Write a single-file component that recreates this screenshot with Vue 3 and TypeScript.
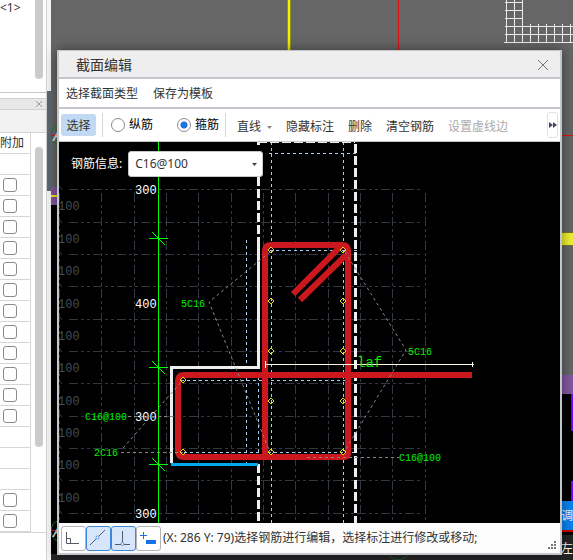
<script setup lang="ts">
import { ref } from 'vue'

type Point = [number, number]

const rows = ref([
  { hasBox: false, checked: false },
  ...Array.from({ length: 12 }, () => ({ hasBox: true, checked: false })),
  ...Array.from({ length: 3 }, () => ({ hasBox: false, checked: false })),
  ...Array.from({ length: 2 }, () => ({ hasBox: true, checked: false })),
])

const barKind = ref('stirrup')
const barInfo = ref('C16@100')
const snap = ref<Record<string, boolean>>({ angle: false, line: true, perp: true, add: false })

const gridY = [189, 222, 254, 286, 319, 351, 383, 416, 448, 480, 513]
const gridX = [101, 134, 166, 198, 231, 263, 295, 328, 360, 392, 425]
const spacingY = [206, 239, 271, 304, 336, 368, 401, 433, 465, 498]
const dimTicks = [238, 367, 464]
const dims: { y: number; text: string }[] = [
  { y: 194, text: '300' },
  { y: 308, text: '400' },
  { y: 421, text: '300' },
  { y: 518, text: '300' },
]
const tags: { x: number; y: number; text: string }[] = [
  { x: 181, y: 307, text: '5C16' },
  { x: 408, y: 355, text: '5C16' },
  { x: 85, y: 420, text: 'C16@100' },
  { x: 94, y: 456, text: '2C16' },
  { x: 399, y: 461, text: 'C16@100' },
]
const bars: Point[] = [
  ...[250, 301, 351, 401, 452].flatMap((y): Point[] => [[271, y], [343, y]]),
  [183, 380],
  [183, 452],
]
const meshX = [530, 538, 546, 554, 562, 570]
</script>

<template>
  <div class="app">
    <aside class="side">
      <section class="tree">
        <span class="tree-text">&lt;1&gt;</span>
        <span class="thumb tree-thumb"></span>
      </section>
      <header class="dock-head">
        <button class="dock-close" aria-label="关闭">
          <svg width="8" height="8" viewBox="0 0 8 8"><path d="M1 1l6 6M7 1l-6 6" /></svg>
        </button>
      </header>
      <section class="props">
        <table>
          <thead><tr><th>附加</th></tr></thead>
          <tbody>
            <tr v-for="(row, i) in rows" :key="i">
              <td><input v-if="row.hasBox" v-model="row.checked" type="checkbox" aria-label="附加" /></td>
            </tr>
          </tbody>
        </table>
        <div class="track"><span class="thumb"></span></div>
      </section>
    </aside>

    <div class="gutter"><span></span></div>

    <main class="work">
      <svg class="scene" viewBox="51 0 522 560" preserveAspectRatio="xMinYMin slice">
        <rect x="51" y="0" width="522" height="560" fill="#666" />
        <path d="M289 0V200" stroke="#8f8f28" stroke-width="4" />
        <path d="M289 0V200" stroke="#f2f200" stroke-width="2" />
        <path d="M398.500 0V200M500 135.500H573" stroke="#e01010" />
        <g stroke="#ededed" fill="none">
          <path d="M506.500 0V42M514.500 0V42M522.500 0V42M505 2.500H523M505 10.500H523M505 18.500H523M505 26.500H573M505 34.500H573M504 42.500H573" />
          <path v-for="x in meshX" :key="x" :d="`M${x + 0.5} 24V42`" />
        </g>
        <ellipse cx="59" cy="135" rx="8" ry="10" fill="none" stroke="#118a22" />
        <path d="M51 135.500H60" stroke="#e01010" />
        <text x="53" y="141" class="axis">A</text>
        <rect x="51" y="187" width="20" height="18" fill="#8557a3" />
        <rect x="51" y="195" width="20" height="2" fill="#f2f200" />
        <rect x="51" y="205" width="20" height="350" fill="#000" />
        <ellipse cx="59" cy="531" rx="8" ry="10" fill="none" stroke="#118a22" />
        <path d="M51 530.500H60" stroke="#e01010" />
        <text x="53" y="537" class="axis">A</text>
        <rect x="550" y="232" width="23" height="13" fill="#f0f032" />
        <path d="M550 232.500H573M550 245.500H573" stroke="#777722" />
        <rect x="550" y="375" width="23" height="19" fill="#8557a3" />
        <rect x="550" y="394" width="23" height="141" fill="#000" />
        <path d="M572 394V431M572 481V501" stroke="#7a00ff" stroke-width="2" />
        <rect x="550" y="501" width="23" height="29" fill="#0a84f0" />
        <path d="M550 531H573" stroke="#d00000" stroke-width="2" />
        <rect x="51" y="554" width="522" height="6" fill="#242424" />
        <rect x="550" y="535" width="23" height="25" fill="#242424" />
        <ellipse cx="398" cy="551" rx="10" ry="9" fill="none" stroke="#1d5a25" />
        <text x="561" y="520" class="cap">调</text>
        <text x="561" y="553" class="cap">左</text>
      </svg>
    </main>

    <section class="dialog" role="dialog" aria-label="截面编辑">
      <header class="title">
        <h1>截面编辑</h1>
        <button class="close" aria-label="关闭">
          <svg width="12" height="12" viewBox="0 0 12 12"><path d="M1 1l10 10M11 1L1 11" /></svg>
        </button>
      </header>

      <nav class="menu">
        <button>选择截面类型</button>
        <button>保存为模板</button>
      </nav>

      <div class="tools">
        <button class="pick">选择</button>
        <i class="sep"></i>
        <div class="radios">
          <label><input v-model="barKind" type="radio" name="kind" value="long" />纵筋</label>
          <label><input v-model="barKind" type="radio" name="kind" value="stirrup" />箍筋</label>
        </div>
        <i class="sep"></i>
        <div class="actions">
          <button class="drop">直线<svg width="5" height="3" viewBox="0 0 5 3"><path d="M0 0h5L2.500 3z" fill="#888" /></svg></button>
          <button>隐藏标注</button>
          <button>删除</button>
          <button>清空钢筋</button>
          <button disabled>设置虚线边</button>
        </div>
        <button class="more" aria-label="更多">
          <svg width="8" height="6" viewBox="0 0 8 6"><path d="M0 0l4 3-4 3zM4 0l4 3-4 3z" fill="#44485e" /></svg>
        </button>
      </div>

      <div class="canvas">
        <svg viewBox="59 142 501 381" preserveAspectRatio="xMinYMin meet">
          <g class="grid">
            <path v-for="y in gridY" :key="'h' + y" :d="`M69 ${y + 0.5}H422`" />
            <path v-for="x in gridX" :key="'v' + x" :d="`M${x + 0.5} 193V523`" />
            <path d="M59.500 193V523" />
            <path v-for="y in gridY" :key="'e' + y" :d="`M59 ${y - 3}l3 4`" class="solid" />
          </g>
          <g class="mono dim-grid">
            <text v-for="y in spacingY" :key="y" x="58" :y="y + 4">100</text>
          </g>

          <g class="guides">
            <path d="M271.500 142V523M343.500 142V523M269 153.500H357M270 250.500H357" />
            <path d="M246.500 240V464M258.500 377V454M181 380.500H345M178 452.500H357" />
          </g>

          <g class="axis-green">
            <path d="M158.500 142V523" />
            <path v-for="y in dimTicks" :key="y" :d="`M149 ${y + 0.5}h19M152 ${y - 6}l13 13`" />
          </g>
          <g class="mono dims">
            <text v-for="d in dims" :key="d.y" x="135" :y="d.y">{{ d.text }}</text>
          </g>

          <path class="outline" d="M258.500 237V367.500H171.500V463" />
          <path class="outline dashed" d="M258.500 177V237M258.500 464V523M355.500 144V523" />
          <path d="M258 142.500H355" stroke="#eee" stroke-dasharray="9 3" />
          <path d="M258.500 142V145" stroke="#eee" stroke-width="3" />
          <path d="M171 464.500H258" stroke="#00a8ee" stroke-width="3" />

          <g class="rebar">
            <path d="M472 375H184Q178 375 178 381V451Q178 457 184 457H344Q348 457 348 453V251Q348 245 342 245H271Q265 245 265 251V457" />
            <path d="M341 246L293 294M346 255L300 300" />
          </g>

          <g class="leaders">
            <path d="M270 252L209 302L270 452" />
            <path d="M345 252L406 350L344 452" />
            <path d="M128 416.500H175M121 452.500H183M123 448L183 380M307 457.500H399" />
          </g>
          <path v-for="(p, i) in bars" :key="i" class="bar" :d="`M${p[0] - 3} ${p[1]}l3-3 3 3-3 3z`" />

          <path class="measure" d="M265 364.500H474M265.500 361V368M472.500 362V367" />
          <g class="mono tags">
            <text v-for="(t, i) in tags" :key="i" :x="t.x" :y="t.y">{{ t.text }}</text>
            <text x="357" y="367" class="laf">laf</text>
          </g>
        </svg>

        <div class="info">
          <label for="bar-info">钢筋信息:</label>
          <div class="combo">
            <select id="bar-info" v-model="barInfo">
              <option>C16@100</option>
            </select>
            <svg width="5" height="3" viewBox="0 0 5 3"><path d="M0 0h5L2.500 3z" fill="#444" /></svg>
          </div>
        </div>
      </div>

      <footer class="status">
        <button :class="{ on: snap.angle }" aria-label="角度" @click="snap.angle = !snap.angle">
          <svg width="25" height="25" viewBox="0 0 25 25"><path d="M5.500 6V17.500H18M5.500 12.500H9.500V17" /></svg>
        </button>
        <button :class="{ on: snap.line }" aria-label="直线" @click="snap.line = !snap.line">
          <svg width="25" height="25" viewBox="0 0 25 25"><path d="M4 19L19 4" /><circle cx="11.500" cy="11.500" r="1.500" class="node" /></svg>
        </button>
        <button :class="{ on: snap.perp }" aria-label="垂直" @click="snap.perp = !snap.perp">
          <svg width="25" height="25" viewBox="0 0 25 25"><path d="M11.500 5V18M4 18.500H19" /><circle cx="11.500" cy="18" r="1.500" class="node" /></svg>
        </button>
        <button :class="{ on: snap.add }" aria-label="添加" @click="snap.add = !snap.add">
          <svg width="25" height="25" viewBox="0 0 25 25"><path d="M4 9.500H11M7.500 6V13" stroke="#1373e6" /><rect x="10" y="14" width="10" height="4" fill="#1373e6" /></svg>
        </button>
        <output>(X: 286 Y: 79)选择钢筋进行编辑，选择标注进行修改或移动;</output>
        <svg class="grip" width="8" height="8" viewBox="0 0 8 8"><path d="M6 0h2v2h-2zM3 3h2v2h-2zM6 3h2v2h-2zM0 6h2v2h-2zM3 6h2v2h-2zM6 6h2v2h-2z" fill="#777" /></svg>
      </footer>
    </section>
  </div>
</template>

<style>
body {
  margin: 0;
}
</style>

<style scoped>
.app {
  position: relative;
  display: grid;
  grid-template-columns: 47px 4px 1fr;
  min-height: 100vh;
  overflow: hidden;
  font: 12px/16px "Noto Sans", "Noto Sans CJK SC", sans-serif;
  color: #333;
}
button {
  font: inherit;
  color: inherit;
  padding: 0;
  border: 0;
  background: none;
  white-space: nowrap;
}
svg {
  display: block;
}

.side {
  display: flex;
  flex-direction: column;
  min-width: 0;
  box-sizing: border-box;
  border-right: 1px solid #d4d4d4;
  background: #fff;
}
.tree {
  display: flex;
  justify-content: space-between;
  height: 93px;
  padding-right: 3px;
  border-bottom: 1px solid #c8c8c8;
  box-sizing: border-box;
}
.tree-text {
  width: 20px;
  font-size: 12px;
}
.thumb {
  width: 8px;
  border-radius: 0 0 4px 4px;
  background: #cacaca;
}
.tree-thumb {
  height: 79px;
}
.dock-head {
  display: flex;
  justify-content: flex-end;
  align-items: center;
  height: 12px;
  margin-top: 5px;
  padding-right: 3px;
  box-sizing: border-box;
  border: solid #d0d0d0;
  border-width: 1px 0;
  background: #e8e8e8;
}
.dock-close path {
  fill: none;
  stroke: #999;
}
.props {
  display: flex;
  align-items: flex-start;
  margin-top: 22px;
  border: solid #d4d4d4;
  border-width: 1px 0;
  box-shadow: 0 -22px #f2f2f2;
}
table {
  width: 31px;
  border-collapse: separate;
  border-spacing: 0;
  table-layout: fixed;
}
th,
td {
  height: 21px;
  padding: 0 0 0 3px;
  box-sizing: border-box;
  border: solid #d6d6d6;
  border-width: 0 1px 1px 0;
  font-weight: 400;
  line-height: 14px;
  text-align: left;
  white-space: nowrap;
}
th {
  padding: 0;
}
td input {
  display: block;
  appearance: none;
  width: 14px;
  height: 14px;
  margin: 0;
  border: 1px solid #8a8a8a;
  border-radius: 3px;
  background: #fff;
}
.track {
  display: flex;
  flex: 1;
  align-self: stretch;
  justify-content: flex-end;
  padding: 14px 3px 85px 0;
}
.track .thumb {
  border-radius: 4px;
}

.gutter {
  padding-top: 91px;
  background: #f5f5f5;
}
.gutter span {
  display: block;
  height: 100px;
  background: #5c6670;
}

.work {
  position: relative;
  overflow: hidden;
  background: #666;
}
.scene {
  position: absolute;
  width: 100%;
  height: 100%;
}
.axis {
  font: italic 16px "Liberation Sans", sans-serif;
  fill: #eee;
}
.cap {
  font-size: 12px;
  fill: #fff;
}

.dialog {
  position: absolute;
  inset: 50px 11px 5px 57px;
  display: flex;
  flex-direction: column;
  border: solid #c3c7cb;
  border-width: 1px 2px 2px;
  background: #fff;
  box-shadow: 0 0 12px rgba(0, 0, 0, 0.45);
}
.title {
  display: flex;
  align-items: center;
  justify-content: space-between;
  height: 26px;
  padding: 2px 11px 0 17px;
  box-sizing: border-box;
  background: #eee;
}
h1 {
  margin: 0;
  font-size: 14px;
  font-weight: 400;
  line-height: 20px;
}
.close path {
  fill: none;
  stroke: #777;
}
.menu {
  display: flex;
  gap: 15px;
  align-items: center;
  height: 30px;
  padding: 2px 7px 0;
  box-sizing: border-box;
  border-top: 2px solid #c3c7cb;
}
.tools {
  display: flex;
  align-items: center;
  height: 35px;
  padding: 0 2px;
  box-sizing: border-box;
  border: solid #c3c7cb;
  border-width: 2px 0 1px;
}
.pick {
  width: 35px;
  height: 22px;
  padding-top: 2px;
  border-radius: 3px;
  background: #c1d9f3;
}
.sep {
  width: 1px;
  height: 24px;
  margin: 0 6px;
  background: #d5d8db;
}
.radios {
  display: flex;
  gap: 24px;
  padding-left: 2px;
  color: #000;
}
.radios label {
  display: flex;
  align-items: center;
  gap: 4px;
}
.radios input {
  appearance: none;
  width: 14px;
  height: 14px;
  margin: 0;
  border: 1px solid #8a8a8a;
  border-radius: 50%;
  background: #fff;
}
.radios input:checked {
  background: radial-gradient(circle, #1a73e0 0 3px, #fff 4px);
}
.actions {
  display: flex;
  flex: 1;
  gap: 14px;
  padding: 4px 0 0 5px;
}
.drop {
  display: flex;
  align-items: center;
  gap: 6px;
}
.actions button:disabled {
  color: #aaa;
}
.more {
  display: grid;
  place-items: center;
  width: 11px;
  height: 26px;
  border: 1px solid #e2e2e2;
  border-radius: 3px;
}

.canvas {
  position: relative;
  flex: 1;
  min-height: 0;
  overflow: hidden;
  background: #000;
}
.canvas > svg {
  width: 100%;
  height: 100%;
}
.canvas path {
  fill: none;
}
.combo path {
  fill: #444;
}
.grid {
  stroke: #303844;
  stroke-dasharray: 9 3 3 3 3 3;
}
.grid .solid {
  stroke-dasharray: none;
}
.mono {
  font-family: "Liberation Mono", monospace;
}
.dim-grid {
  font-size: 12px;
  fill: #434b56;
}
.dims {
  font-size: 12px;
  fill: #fff;
}
.tags {
  font-size: 10px;
  fill: #00f000;
}
.laf {
  font-size: 14px;
}
.guides {
  stroke: #a9cdf5;
  stroke-dasharray: 3 3;
}
.axis-green {
  stroke: #00ff00;
}
.outline {
  stroke: #eee;
  stroke-width: 3;
}
.dashed {
  stroke-dasharray: 9 3;
}
.rebar {
  stroke: #cb171e;
  stroke-width: 6;
}
.leaders {
  stroke: #858585;
  stroke-dasharray: 3 3;
}
.bar {
  stroke: #f0d820;
}
.measure {
  stroke: #fff8e8;
}

.info {
  position: absolute;
  top: 9px;
  left: 12px;
  display: flex;
  align-items: center;
  gap: 6px;
  color: #fff;
}
.combo {
  display: flex;
  align-items: center;
  width: 135px;
  height: 26px;
  border: 1px solid #c8c8c8;
  border-radius: 3px;
  box-sizing: border-box;
  background: #fff;
  padding-right: 5px;
}
.combo select {
  flex: 1;
  height: 24px;
  padding: 0 6px;
  border: 0;
  appearance: none;
  background: none;
  font: inherit;
  color: #333;
}

.status {
  display: flex;
  align-items: center;
  height: 30px;
  padding: 0 4px 0 2px;
  background: #fcfcfc;
}
.status button {
  width: 25px;
  height: 25px;
  box-sizing: border-box;
  border: 1px solid #b4b4b4;
  border-radius: 3px;
  background: #fff;
}
.status button svg {
  margin: -1px;
}
.status button path {
  fill: none;
  stroke: #555b66;
}
.status button path[stroke] {
  stroke: #1373e6;
}
.status button.on {
  border-color: #3d87dd;
  background: #d7e6fa;
}
.node {
  fill: #fff;
  stroke: #4a8fe0;
}
.status output {
  flex: 1;
  padding-left: 2px;
  white-space: nowrap;
}
.grip {
  align-self: flex-end;
  margin-bottom: 4px;
}
</style>
